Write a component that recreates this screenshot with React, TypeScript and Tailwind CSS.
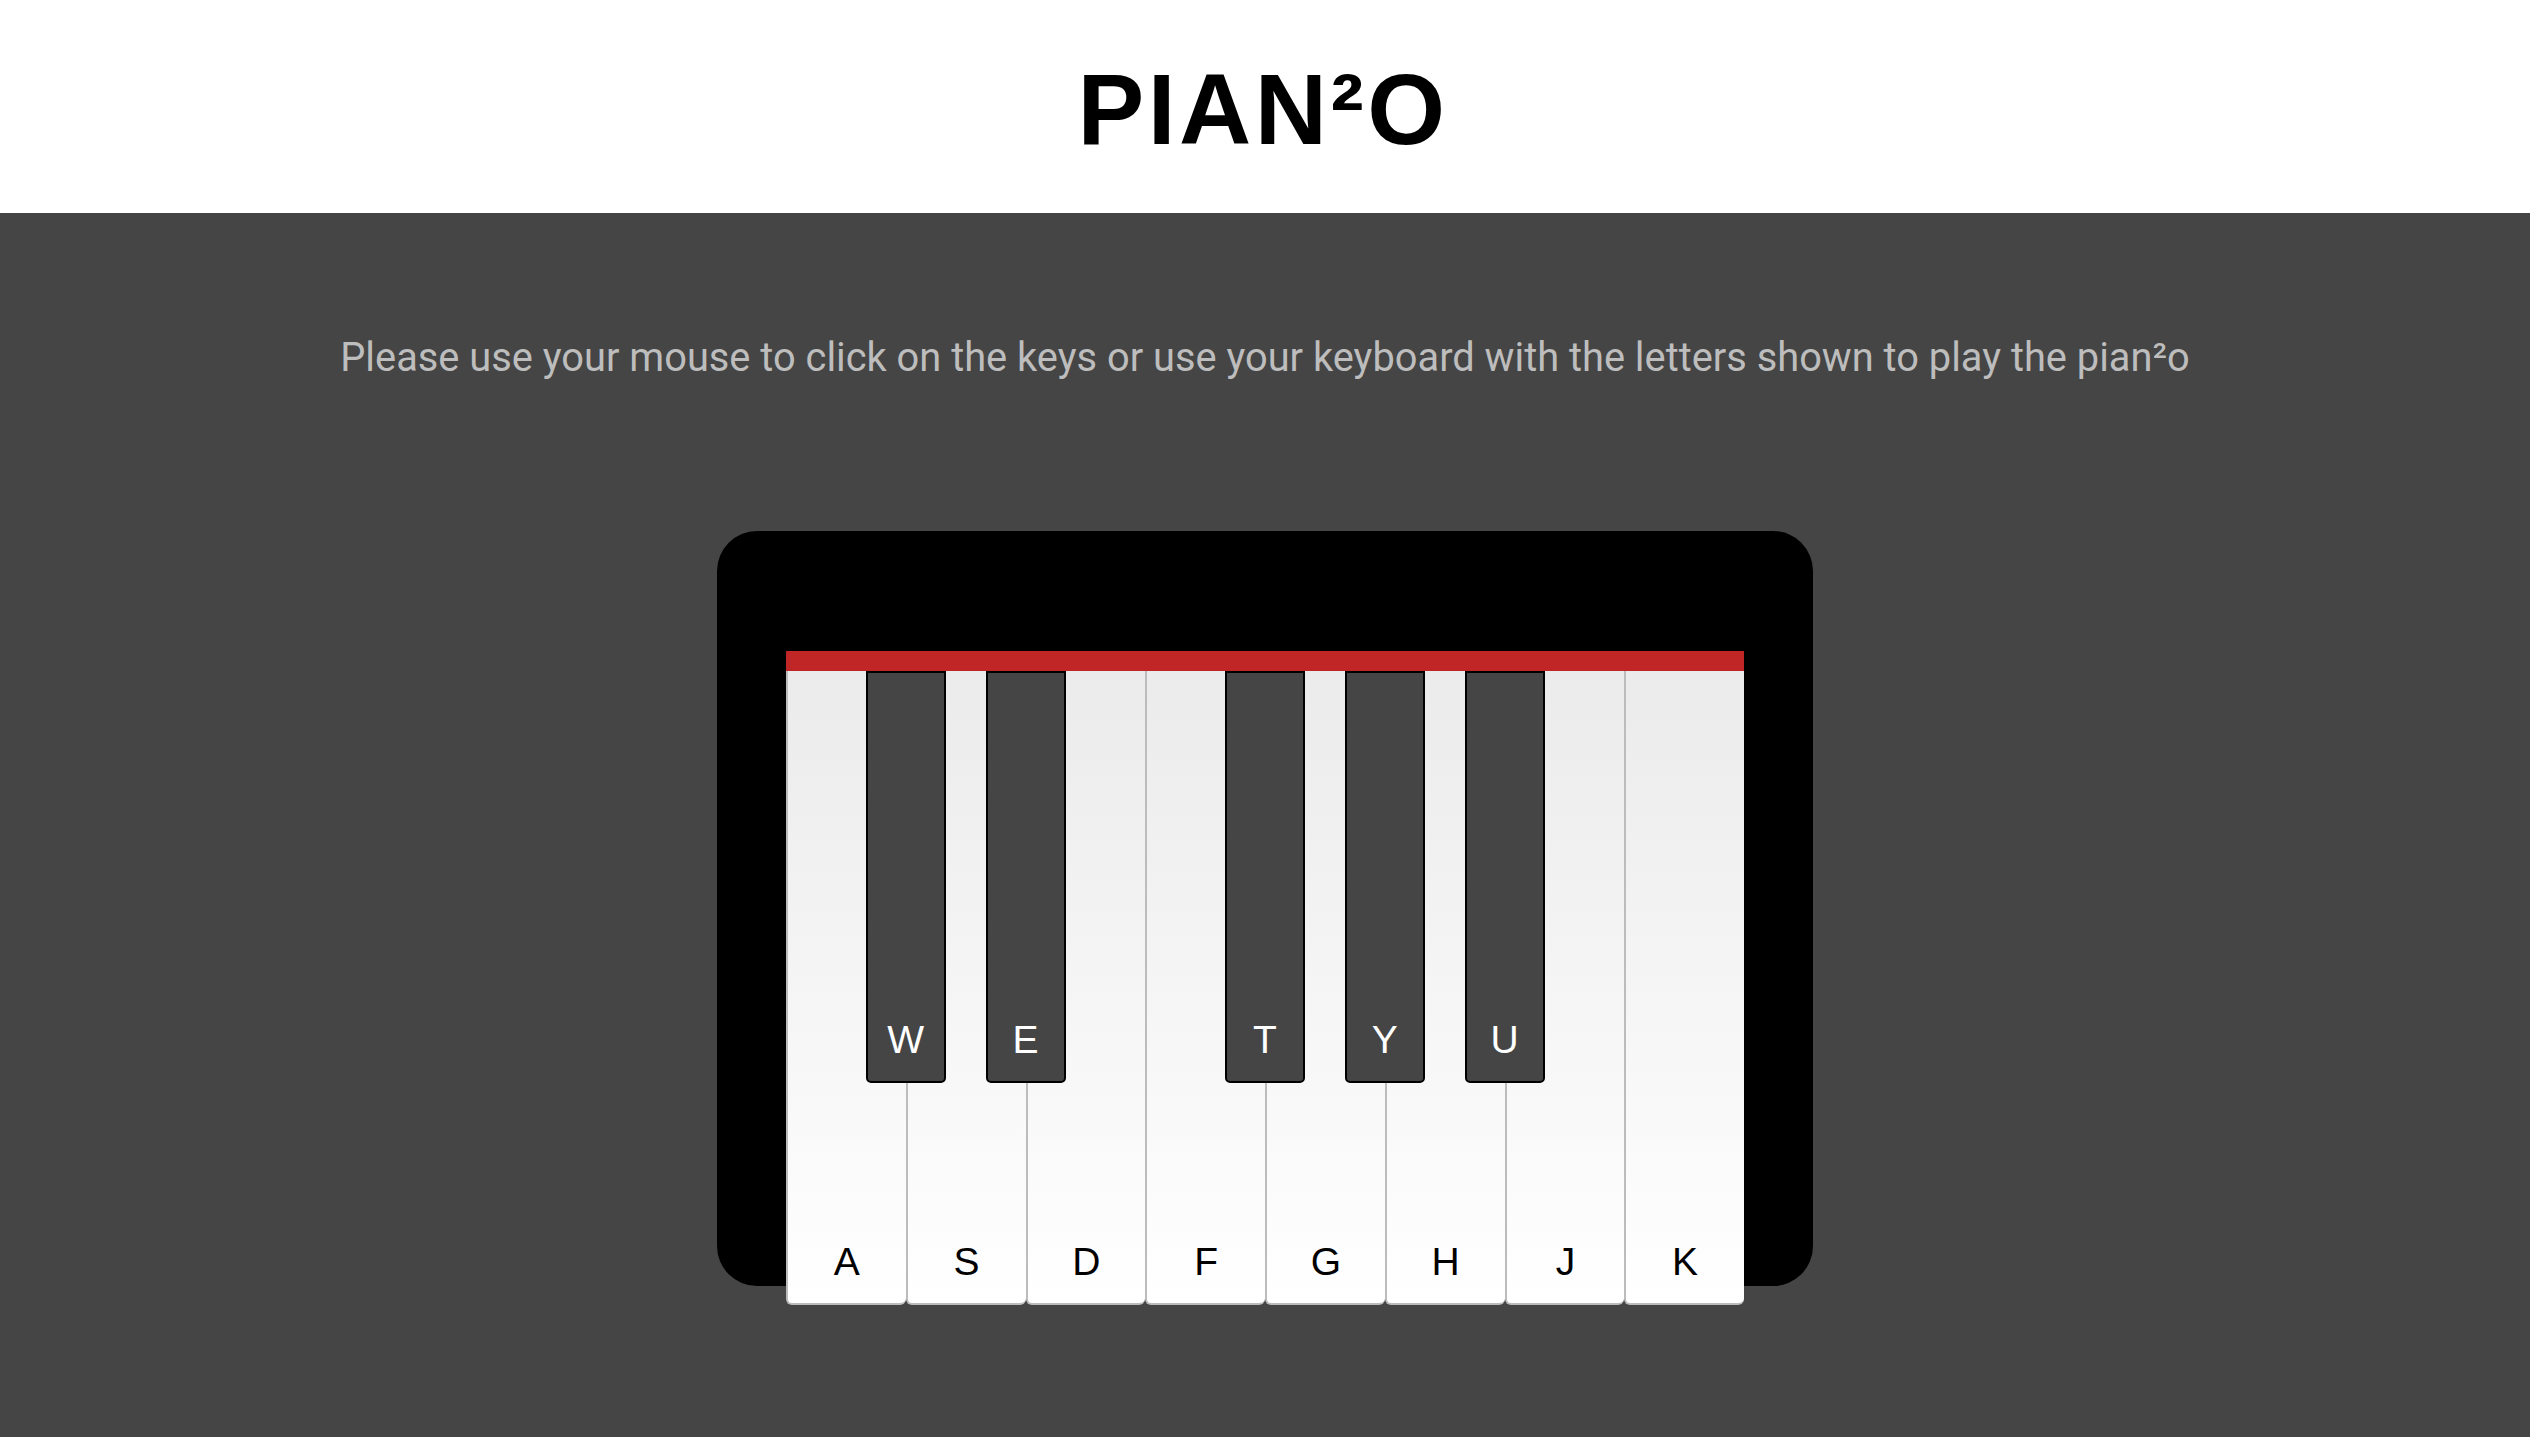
import React from "react";

const whites = ["A", "S", "D", "F", "G", "H", "J", "K"];
const blacks = [
  { k: "W", cls: "left-[calc(12.5%-40px)]" },
  { k: "E", cls: "left-[calc(25%-40px)]" },
  { k: "T", cls: "left-[calc(50%-40px)]" },
  { k: "Y", cls: "left-[calc(62.5%-40px)]" },
  { k: "U", cls: "left-[calc(75%-40px)]" },
];

export default function App() {
  return (
    <div className="min-h-[1448px] bg-white">
      <header className="h-[213px] flex items-center justify-center pt-[4px]">
        <h1 className="font-['Liberation_Sans',Arial,sans-serif] text-[100px] leading-none font-bold text-black tracking-[3.5px] pr-[4px]">
          PIAN²O
        </h1>
      </header>
      <main className="h-[1224px] bg-[#454545] flex flex-col items-center">
        <p className="mt-[122px] font-['Roboto',sans-serif] text-[39.8px] leading-[46px] text-[#bdbdbd] whitespace-nowrap">
          Please use your mouse to click on the keys or use your keyboard with the letters shown to play the pian²o
        </p>
        <div className="mt-[150px] w-[1096px] h-[755px] bg-black rounded-[40px] px-[69px] pt-[120px]">
          <div className="h-[20px] bg-[#c12626]" />
          <div className="relative grid grid-cols-8 h-[634px]">
            {whites.map((k) => (
              <div
                key={k}
                className="flex items-end justify-center pb-[22px] border-l-2 border-b-2 border-[#bcbcbc] rounded-b-[6px] bg-gradient-to-b from-[#ebebeb] to-white"
              >
                <span className="font-['Liberation_Sans',Arial,sans-serif] text-[39px] leading-none text-black">
                  {k}
                </span>
              </div>
            ))}
            {blacks.map((b) => (
              <div
                key={b.k}
                className={`absolute top-0 ${b.cls} w-[80px] h-[412px] bg-[#454545] border-2 border-black rounded-b-[5px] flex items-end justify-center pb-[22px]`}
              >
                <span className="font-['Liberation_Sans',Arial,sans-serif] text-[39px] leading-none text-white">
                  {b.k}
                </span>
              </div>
            ))}
          </div>
        </div>
      </main>
    </div>
  );
}
